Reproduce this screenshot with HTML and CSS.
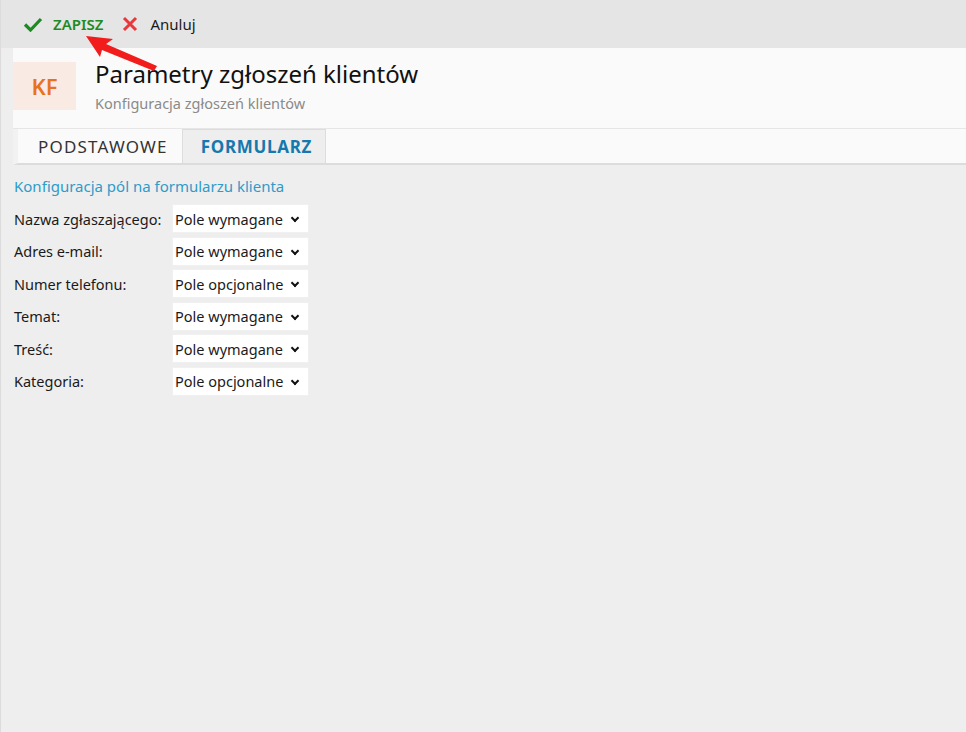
FILE: index.html
```html
<!DOCTYPE html>
<html lang="pl">
<head>
<meta charset="utf-8">
<link rel="stylesheet" href="styles.css">
</head>
<body>
<div class="toolbar">
  <button class="tb-btn save">
    <svg width="20" height="16" viewBox="0 0 20 16"><path d="M2 8.5 L7.5 14 L18 3" fill="none" stroke="#1f8a24" stroke-width="3.2"/></svg>
    <span>ZAPISZ</span>
  </button>
  <button class="tb-btn cancel">
    <svg width="16" height="16" viewBox="0 0 16 16"><path d="M2 2 L14 14 M14 2 L2 14" fill="none" stroke="#e8383b" stroke-width="3"/></svg>
    <span>Anuluj</span>
  </button>
</div>
<div class="page">
  <div class="header">
    <div class="badge">KF</div>
    <div class="titles">
      <h1>Parametry zgłoszeń klientów</h1>
      <div class="subtitle">Konfiguracja zgłoszeń klientów</div>
    </div>
  </div>
  <div class="tabs">
    <div class="tab">PODSTAWOWE</div>
    <div class="tab active">FORMULARZ</div>
  </div>
  <div class="content">
    <div class="section-title">Konfiguracja pól na formularzu klienta</div>
    <div class="form">
      <label>Nazwa zgłaszającego:</label><div class="sel">Pole wymagane<span class="chev"></span></div>
      <label>Adres e-mail:</label><div class="sel">Pole wymagane<span class="chev"></span></div>
      <label>Numer telefonu:</label><div class="sel">Pole opcjonalne<span class="chev"></span></div>
      <label>Temat:</label><div class="sel">Pole wymagane<span class="chev"></span></div>
      <label>Treść:</label><div class="sel">Pole wymagane<span class="chev"></span></div>
      <label>Kategoria:</label><div class="sel">Pole opcjonalne<span class="chev"></span></div>
    </div>
  </div>
</div>
<svg class="arrow" width="90" height="50" viewBox="0 0 90 50">
  <path d="M2 9 L29 12 L22 17 L73 39 L70 44 L18 23 L16 30 Z" fill="#f21c1c"/>
</svg>
</body>
</html>
```
FILE: styles.css
```css
* { box-sizing: border-box; }
html, body { margin: 0; padding: 0; }
body {
  width: 966px;
  height: 732px;
  overflow: hidden;
  background: #eeeeee;
  font-family: "Noto Sans", "Open Sans", sans-serif;
  color: #1a1a1a;
  position: relative;
  border-left: 1px solid #dcdcdc;
}
.toolbar {
  height: 48px;
  background: #e5e5e5;
  display: flex;
  align-items: center;
  padding-left: 22px;
  gap: 19px;
}
.tb-btn {
  display: flex;
  align-items: center;
  gap: 10px;
  border: 0;
  background: none;
  padding: 0;
  font-family: inherit;
  font-size: 15px;
  cursor: pointer;
}
.tb-btn.save { color: #1f8a24; font-weight: 600; font-size: 15px; }
.tb-btn.cancel { color: #1a1a1a; gap: 12px; }
.page { padding-left: 12px; }
.header {
  background: #fafafa;
  height: 81px;
  display: flex;
  align-items: flex-start;
  padding-top: 14px;
  gap: 19px;
  border-bottom: 1px solid #e6e6e6;
}
.badge {
  width: 63px;
  height: 48px;
  background: #f9ebe3;
  color: #e8731e;
  font-size: 22px;
  font-weight: 600;
  display: flex;
  align-items: center;
  justify-content: center;
}
.titles { margin-top: -5px; }
h1 {
  margin: 0;
  font-size: 24px;
  font-weight: 400;
  color: #111;
  line-height: 33px;
}
.subtitle {
  font-size: 14.5px;
  color: #8a8a8a;
  margin-top: 3px;
}
.tabs {
  background: #fafafa;
  height: 36px;
  display: flex;
  border-bottom: 2px solid #dcdcdc;
  border-left: 5px solid #f2f2f2;
}
.tab {
  display: flex;
  align-items: center;
  font-size: 17px;
  color: #333;
  padding: 0 14px 0 20px;
  letter-spacing: 1.2px;
}
.tab.active {
  background: #eeeeee;
  border: 1px solid #dddddd;
  border-bottom: 0;
  color: #1778ad;
  font-weight: 700;
  padding: 0 13px 0 18px;
  letter-spacing: 0.7px;
}
.content { padding: 11px 0 0 1px; }
.section-title {
  color: #2f9bc9;
  font-size: 15px;
  margin-bottom: 8px;
}
.form {
  display: grid;
  grid-template-columns: 158px 137px;
  row-gap: 3.5px;
  align-items: center;
}
.form label { font-size: 14.5px; color: #1a1a1a; }
.sel {
  height: 29px;
  background: #fff;
  border: 1px solid #f0f0f0;
  font-size: 14.5px;
  display: flex;
  align-items: center;
  padding-left: 2px;
  position: relative;
}
.chev {
  position: absolute;
  right: 10px;
  top: 10px;
  width: 6px;
  height: 6px;
  border-right: 2px solid #111;
  border-bottom: 2px solid #111;
  transform: rotate(45deg);
}
.arrow {
  position: absolute;
  left: 83px;
  top: 27px;
}
```
